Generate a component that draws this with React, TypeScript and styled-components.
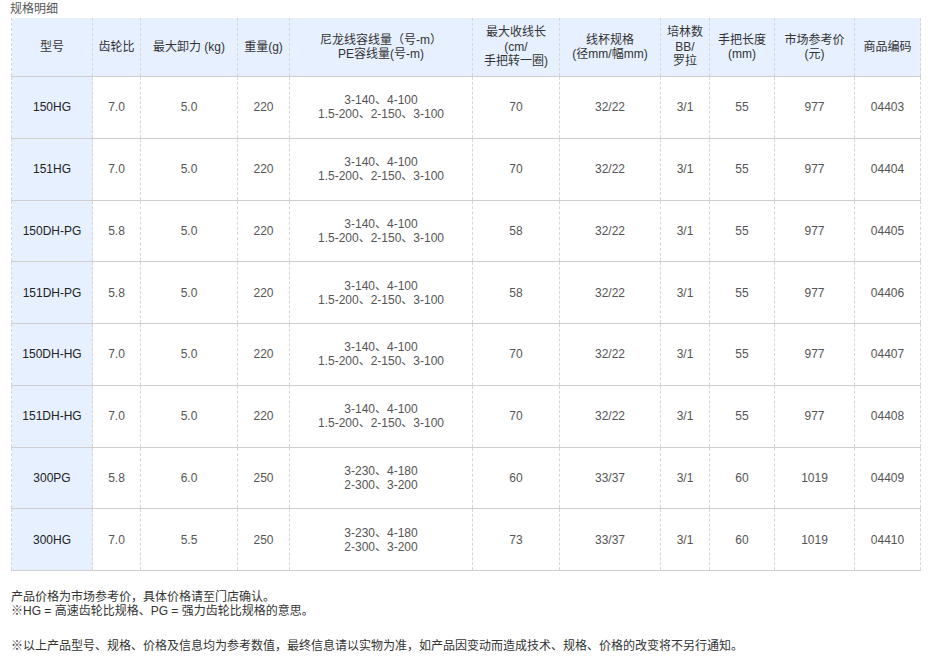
import React from "react";
import styled, { createGlobalStyle } from "styled-components";

const GlobalStyle = createGlobalStyle`
  html, body {
    margin: 0;
    padding: 0;
    background: #fff;
  }
  body {
    font-family: "Liberation Sans", Arial, "Noto Sans CJK SC", sans-serif;
    font-size: 12px;
    color: #333;
  }
`;

const COLS = [81, 48, 97, 52, 183, 87, 101, 49, 65, 80, 66];

const HEADERS: React.ReactNode[] = [
  "型号",
  "齿轮比",
  "最大卸力 (kg)",
  "重量(g)",
  <>尼龙线容线量（号-m）<br />PE容线量(号-m)</>,
  <>最大收线长<br />(cm/<br />手把转一圈)</>,
  <>线杯规格<br />(径mm/幅mm)</>,
  <>培林数<br />BB/<br />罗拉</>,
  <>手把长度<br />(mm)</>,
  <>市场参考价<br />(元)</>,
  "商品编码",
];

type Row = {
  model: string;
  gear: string;
  drag: string;
  weight: string;
  nylon: string;
  pe: string;
  retrieve: string;
  spool: string;
  bearings: string;
  handle: string;
  price: string;
  code: string;
};

const ROWS: Row[] = [
  { model: "150HG", gear: "7.0", drag: "5.0", weight: "220", nylon: "3-140、4-100", pe: "1.5-200、2-150、3-100", retrieve: "70", spool: "32/22", bearings: "3/1", handle: "55", price: "977", code: "04403" },
  { model: "151HG", gear: "7.0", drag: "5.0", weight: "220", nylon: "3-140、4-100", pe: "1.5-200、2-150、3-100", retrieve: "70", spool: "32/22", bearings: "3/1", handle: "55", price: "977", code: "04404" },
  { model: "150DH-PG", gear: "5.8", drag: "5.0", weight: "220", nylon: "3-140、4-100", pe: "1.5-200、2-150、3-100", retrieve: "58", spool: "32/22", bearings: "3/1", handle: "55", price: "977", code: "04405" },
  { model: "151DH-PG", gear: "5.8", drag: "5.0", weight: "220", nylon: "3-140、4-100", pe: "1.5-200、2-150、3-100", retrieve: "58", spool: "32/22", bearings: "3/1", handle: "55", price: "977", code: "04406" },
  { model: "150DH-HG", gear: "7.0", drag: "5.0", weight: "220", nylon: "3-140、4-100", pe: "1.5-200、2-150、3-100", retrieve: "70", spool: "32/22", bearings: "3/1", handle: "55", price: "977", code: "04407" },
  { model: "151DH-HG", gear: "7.0", drag: "5.0", weight: "220", nylon: "3-140、4-100", pe: "1.5-200、2-150、3-100", retrieve: "70", spool: "32/22", bearings: "3/1", handle: "55", price: "977", code: "04408" },
  { model: "300PG", gear: "5.8", drag: "6.0", weight: "250", nylon: "3-230、4-180", pe: "2-300、3-200", retrieve: "60", spool: "33/37", bearings: "3/1", handle: "60", price: "1019", code: "04409" },
  { model: "300HG", gear: "7.0", drag: "5.5", weight: "250", nylon: "3-230、4-180", pe: "2-300、3-200", retrieve: "73", spool: "33/37", bearings: "3/1", handle: "60", price: "1019", code: "04410" },
];

const App = () => {
  return (
    <>
      <GlobalStyle />
      <Page>
        <Title>规格明细</Title>
        <SpecTable>
          <colgroup>
            {COLS.map((w, i) => (
              <col key={i} style={{ width: w }} />
            ))}
          </colgroup>
          <thead>
            <tr>
              {HEADERS.map((h, i) => (
                <HeadCell key={i}>{h}</HeadCell>
              ))}
            </tr>
          </thead>
          <tbody>
            {ROWS.map((r) => (
              <BodyRow key={r.code}>
                <Cell $first>{r.model}</Cell>
                <Cell>{r.gear}</Cell>
                <Cell>{r.drag}</Cell>
                <Cell>{r.weight}</Cell>
                <Cell>
                  {r.nylon}
                  <br />
                  {r.pe}
                </Cell>
                <Cell>{r.retrieve}</Cell>
                <Cell>{r.spool}</Cell>
                <Cell>{r.bearings}</Cell>
                <Cell>{r.handle}</Cell>
                <Cell>{r.price}</Cell>
                <Cell>{r.code}</Cell>
              </BodyRow>
            ))}
          </tbody>
        </SpecTable>
        <Notes>
          产品价格为市场参考价，具体价格请至门店确认。
          <br />
          ※HG = 高速齿轮比规格、PG = 强力齿轮比规格的意思。
        </Notes>
        <Disclaimer>
          ※以上产品型号、规格、价格及信息均为参考数值，最终信息请以实物为准，如产品因变动而造成技术、规格、价格的改变将不另行通知。
        </Disclaimer>
      </Page>
    </>
  );
};

export default App;

const Page = styled.div`
  padding: 0 11px;
  width: 909px;
`;

const Title = styled.div`
  height: 18px;
  line-height: 18px;
  font-size: 12px;
  color: #555;
  margin-left: -1px;
`;

const SpecTable = styled.table`
  width: 909px;
  table-layout: fixed;
  border-collapse: collapse;
  border-left: 1px dashed #d6d6d6;
  border-right: 1px dashed #d6d6d6;
`;

const HeadCell = styled.th`
  height: 58px;
  padding: 0 2px;
  background: #e6f0ff;
  color: #333;
  font-weight: normal;
  font-size: 12px;
  line-height: 14.5px;
  text-align: center;
  vertical-align: middle;
  border-left: 1px dashed #d6d6d6;
  border-bottom: 1px solid #cfcfcf;
`;

const BodyRow = styled.tr`
  height: 61.75px;
`;

const Cell = styled.td<{ $first?: boolean }>`
  padding: 0 2px;
  text-align: center;
  vertical-align: middle;
  font-size: 12px;
  line-height: 14px;
  color: ${(p) => (p.$first ? "#222" : "#555")};
  background: ${(p) => (p.$first ? "#e6f0ff" : "#fff")};
  border-left: 1px dashed #d6d6d6;
  border-bottom: 1px solid #cfcfcf;
`;

const Notes = styled.div`
  margin-top: 19px;
  line-height: 14px;
  color: #333;
`;

const Disclaimer = styled.div`
  margin-top: 21px;
  line-height: 14px;
  color: #333;
`;
